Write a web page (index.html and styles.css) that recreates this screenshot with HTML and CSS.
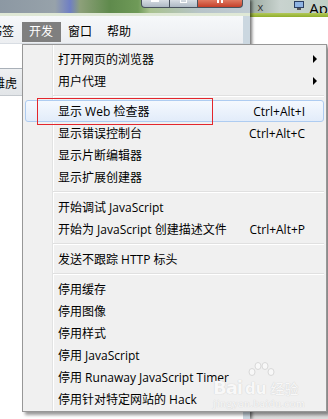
FILE: index.html
```html
<!DOCTYPE html>
<html lang="zh-CN">
<head>
  <meta charset="UTF-8" />
  <title>开发菜单</title>
  <link rel="stylesheet" href="styles.css">
</head>
<body>

<div class="screen">
  <!-- browser window behind the menu -->
  <div class="browser">
    <div class="titlebar">
      <div class="winbtns">
        <span class="wb wb-min"><i></i></span>
        <span class="wb wb-max"><i></i></span>
        <span class="wb wb-close"><i></i></span>
      </div>
    </div>
    <div class="frame">
      <div class="menubar">
        <span class="mb-item first">书签</span>
        <span class="mb-item active">开发</span>
        <span class="mb-item">窗口</span>
        <span class="mb-item">帮助</span>
      </div>
      <div class="toolbar"></div>
      <div class="tabs"><span class="tab">雅虎</span></div>
      <div class="page"></div>
    </div>
  </div>

  <!-- other window on the right -->
  <div class="other">
    <div class="other-title">
      <span class="tab-x">x</span>
      <svg class="pc" width="12" height="10" viewBox="0 0 12 10">
        <rect x="1" y="0" width="10" height="7" fill="#2b3f63" />
        <rect x="2" y="1" width="8" height="5" fill="#8fb4e3" />
        <rect x="4" y="7" width="4" height="2" fill="#555" />
      </svg>
      <span class="ap">Ap</span>
    </div>
    <div class="other-strip"></div>
    <div class="other-body"></div>
  </div>
</div>

<!-- dropdown menu -->
<div class="menu">
  <div class="mi">打开网页的浏览器<span class="arrow"></span></div>
  <div class="mi">用户代理<span class="arrow"></span></div>
  <div class="sep"></div>
  <div class="mi hover">显示 Web 检查器<span class="key">Ctrl+Alt+I</span></div>
  <div class="mi">显示错误控制台<span class="key">Ctrl+Alt+C</span></div>
  <div class="mi">显示片断编辑器</div>
  <div class="mi">显示扩展创建器</div>
  <div class="sep"></div>
  <div class="mi">开始调试 JavaScript</div>
  <div class="mi">开始为 JavaScript 创建描述文件<span class="key">Ctrl+Alt+P</span></div>
  <div class="sep"></div>
  <div class="mi">发送不跟踪 HTTP 标头</div>
  <div class="sep"></div>
  <div class="mi">停用缓存</div>
  <div class="mi">停用图像</div>
  <div class="mi">停用样式</div>
  <div class="mi">停用 JavaScript</div>
  <div class="mi">停用 Runaway JavaScript Timer</div>
  <div class="mi">停用针对特定网站的 Hack</div>
</div>

<!-- red annotation box -->
<div class="mark"></div>

<!-- watermark -->
<div class="watermark">
  <svg class="paw" width="30" height="18" viewBox="0 0 30 18">
    <ellipse cx="6" cy="10" rx="3" ry="3.5" />
    <ellipse cx="12" cy="4" rx="3" ry="3.5" />
    <ellipse cx="19" cy="4" rx="3" ry="3.5" />
    <ellipse cx="25" cy="10" rx="3" ry="3.5" />
  </svg>
  <div class="wm-logo"><span class="wm-bai">Bai</span><span class="wm-du">du</span><span class="wm-jy">经验</span></div>
  <div class="wm-url">jingyan.baidu.com</div>
</div>

</body>
</html>
```

FILE: styles.css
```css
/* Base */
body {
  margin: 0;
  width: 328px;
  height: 419px;
  overflow: hidden;
  position: relative;
  font-family: "Open Sans", "Noto Sans CJK SC", sans-serif;
  font-size: 12px;
  color: #000;
  background: #fff;
}

.screen {
  display: flex;
  height: 419px;
}

/* Browser window (left) */
.browser {
  width: 258px;
  display: flex;
  flex-direction: column;
  box-shadow: 2px 0 3px rgba(0, 0, 0, 0.55);
  position: relative;
  z-index: 1;
}

.titlebar {
  height: 16px;
  display: flex;
  justify-content: flex-end;
  padding-right: 7px;
  background:
    linear-gradient(to bottom, rgba(255,255,255,0) 0, rgba(255,255,255,0) 13px, #dfe8d6 13px, #dfe8d6 16px),
    linear-gradient(to right, #8c98a3 0, #97a2aa 55px, #6f7fc4 70px, #8da07a 80px, #5f8a4c 110px, #6f9a58 138px, #a9c28f 150px, #b7c4c9 200px, #c2cdd5 258px);
}

.winbtns {
  display: flex;
  height: 8px;
}

.wb {
  height: 7px;
  border: 1px solid #48525d;
  border-top: none;
  display: flex;
  justify-content: center;
}

.wb i {
  display: block;
  width: 8px;
  height: 2px;
  background: #fff;
}

.wb-min {
  width: 27px;
  border-radius: 0 0 0 4px;
  background: linear-gradient(#d7dde3, #aeb9c4);
}

.wb-max {
  width: 27px;
  border-left: none;
  background: linear-gradient(#d7dde3, #aeb9c4);
}

.wb-max i {
  width: 7px;
  height: 3px;
  background: none;
  border: 1px solid #fff;
  border-top: none;
  box-sizing: border-box;
}

.wb-close {
  width: 44px;
  border-left: none;
  border-radius: 0 0 4px 0;
  background: linear-gradient(#e07a62, #c5402a);
}

.wb-close i {
  width: 6px;
  height: 3px;
  background: none;
  border-left: 2px solid #fff;
  border-right: 2px solid #fff;
  box-sizing: border-box;
}

.frame {
  flex: 1;
  display: flex;
  flex-direction: column;
  border-right: 7px solid #cbd7e0;
  background: #fff;
  overflow: hidden;
}

/* Menu bar */
.menubar {
  height: 28px;
  box-sizing: border-box;
  padding-top: 6px;
  display: flex;
  background: linear-gradient(#f6f8fa, #eceef1);
  border-bottom: 1px solid #d8dde3;
}

.mb-item {
  height: 20px;
  line-height: 20px;
  padding: 0 8px 0 7px;
  flex-shrink: 0;
}

.mb-item.first {
  margin-left: -17px;
}

.mb-item.active {
  background: #7f7f7f;
  color: #fff;
}

.toolbar {
  height: 24px;
  background: #fff;
  border-bottom: 1px solid #a9b0b8;
}

.tabs {
  height: 26px;
  background: linear-gradient(#eef0f2, #e2e5e8);
  border-bottom: 1px solid #c4c9ce;
  display: flex;
  align-items: center;
  overflow: hidden;
}

.tab {
  margin-left: -7px;
  margin-top: 2px;
}

.page {
  flex: 1;
  background: #fff;
}

/* Other window (right) */
.other {
  flex: 1;
  display: flex;
  flex-direction: column;
}

.other-title {
  height: 13px;
  display: flex;
  align-items: flex-end;
  overflow: hidden;
  background: linear-gradient(to right, #9aa9a0, #c9d3cf 30px, #bfcfc6);
}

.tab-x {
  margin-left: 8px;
  font-size: 11px;
  line-height: 12px;
  color: #333;
}

.pc {
  margin-left: 30px;
  margin-bottom: 2px;
}

.ap {
  margin-left: 4px;
  font-size: 15px;
  line-height: 16px;
  margin-bottom: -3px;
}

.other-strip {
  height: 4px;
  background: linear-gradient(#b3c95a, #8fae2c);
}

.other-body {
  flex: 1;
  background: linear-gradient(to bottom, #fff 0, #fff 27px, #e6e6e6 28px, #dcdcdc);
}

/* Dropdown menu */
.menu {
  position: absolute;
  left: 22px;
  top: 44px;
  width: 305px;
  box-sizing: border-box;
  padding: 3px 2px 1px;
  background: #f0f0f0;
  border: 1px solid #979797;
  box-shadow: 3px 3px 3px rgba(0, 0, 0, 0.4);
  z-index: 5;
}

/* icon gutter line */
.menu::before {
  content: "";
  position: absolute;
  left: 29px;
  top: 0;
  bottom: 0;
  width: 1px;
  background: #e2e3e3;
  border-right: 1px solid #fff;
}

.mi {
  position: relative;
  display: flex;
  align-items: center;
  height: 22px;
  box-sizing: border-box;
  padding: 0 6px 0 32px;
  white-space: nowrap;
  border: 1px solid transparent;
  border-radius: 3px;
}

.mi.hover {
  border-color: #aeccf1;
  background: linear-gradient(#f5f9fe, #e2ecfa);
}

.key {
  margin-left: auto;
  margin-right: 12px;
}

.arrow {
  margin-left: auto;
  width: 0;
  height: 0;
  border-left: 4px solid #000;
  border-top: 4px solid transparent;
  border-bottom: 4px solid transparent;
}

.sep {
  position: relative;
  height: 8px;
  margin-left: 28px;
  background: linear-gradient(to bottom, transparent 3px, #e0e0e0 3px, #e0e0e0 4px, #fff 4px, #fff 5px, transparent 5px);
}

/* Red annotation */
.mark {
  position: absolute;
  left: 37px;
  top: 98px;
  width: 176px;
  height: 27px;
  box-sizing: border-box;
  border: 1px solid #e3262c;
  z-index: 6;
}

/* Watermark */
.watermark {
  position: absolute;
  left: 213px;
  top: 362px;
  width: 88px;
  z-index: 7;
  color: #f8f8f8;
  text-shadow: 0 0 1px #d4d4d4, 0 0 1px #d4d4d4;
}

.paw {
  display: block;
  margin-left: 33px;
  fill: #f8f8f8;
  stroke: #d8d8d8;
  stroke-width: 1;
}

.wm-logo {
  display: flex;
  align-items: baseline;
  font-family: "DejaVu Sans", sans-serif;
  font-weight: bold;
  line-height: 16px;
}

.wm-bai {
  font-size: 18px;
  letter-spacing: -1px;
}

.wm-du {
  font-size: 15px;
  margin-left: 3px;
}

.wm-jy {
  font-family: "Noto Sans CJK SC", sans-serif;
  font-size: 14px;
  font-weight: normal;
  margin-left: 4px;
}

.wm-url {
  font-family: "Liberation Serif", serif;
  font-size: 11px;
  line-height: 12px;
  letter-spacing: 0.6px;
}
```
